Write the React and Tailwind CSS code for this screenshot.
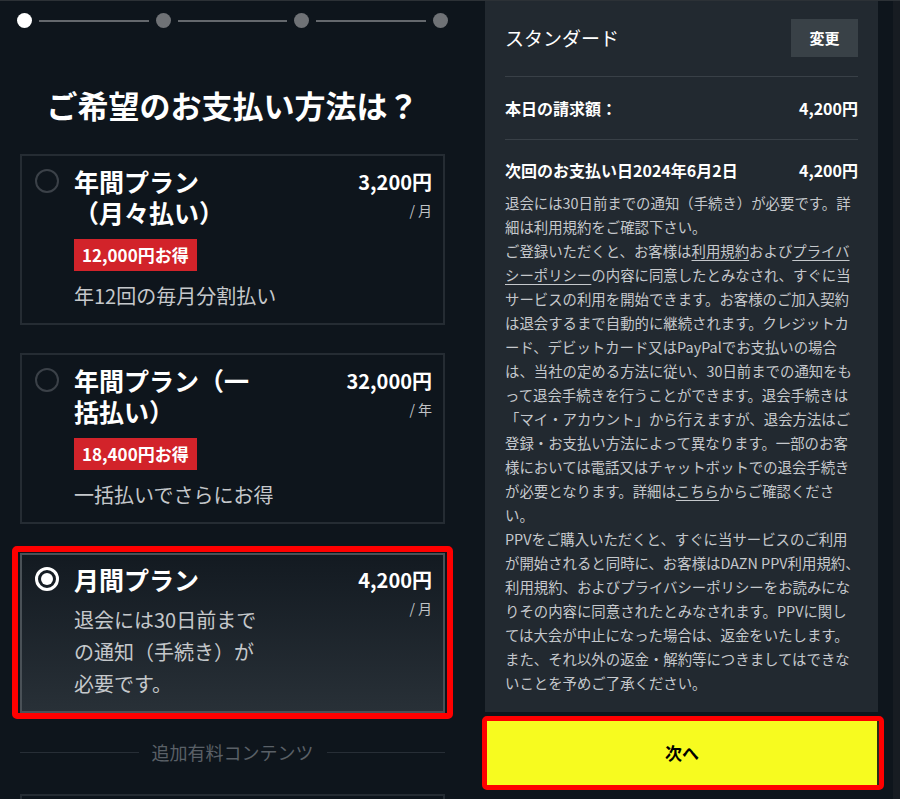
import React from "react";

const FONT = { fontFamily: '"Noto Sans CJK JP", "Noto Sans", sans-serif' };

const Radio = ({ checked }) =>
    checked ? (
        <span className="w-[24px] h-[24px] rounded-full border-[3px] border-white flex items-center justify-center shrink-0 mt-[3px]">
            <span className="w-[12px] h-[12px] rounded-full bg-white"></span>
        </span>
    ) : (
        <span className="w-[24px] h-[24px] rounded-full border-2 border-[#3b4148] shrink-0 mt-[3px]"></span>
    );

// lines joined with <br/> so each block stays one text run
const Lines = ({ items }) =>
    items.map((t, i) => (
        <React.Fragment key={i}>
            {i > 0 && <br />}
            {t}
        </React.Fragment>
    ));

const PlanCard = ({ title, price, unit, badge, desc, checked }) => (
    <div
        className={`flex border-2 pl-[13px] pr-[11px] ${
            checked
                ? "border-[#4a5157] bg-gradient-to-b from-[#131a21] to-[#283037] pt-[9px] pb-[11px]"
                : "border-[#252c33] pt-[10px] pb-[12px]"
        }`}
    >
        <Radio checked={checked} />
        <div className="ml-[15px] flex-1">
            <p className="text-[25px] font-bold text-white leading-[31px] whitespace-nowrap">
                <Lines items={title} />
            </p>
            {badge && (
                <div className="mt-[11px] inline-flex items-center h-[32px] px-[8px] bg-[#d2232a] text-white text-[17px] font-bold">
                    {badge}
                </div>
            )}
            <p
                className={`text-[20px] text-[#c5c8cb] whitespace-nowrap ${
                    checked ? "mt-[9px] leading-[32px]" : "mt-[10px] leading-[30px]"
                }`}
            >
                <Lines items={desc} />
            </p>
        </div>
        <div className="text-right">
            <div className="text-[20px] font-bold text-white leading-[31px]">{price}</div>
            <div className="text-[14px] text-[#c0c3c6] leading-[26px]">{unit}</div>
        </div>
    </div>
);

const U = ({ children }) => <span className="underline underline-offset-[3px]">{children}</span>;

const terms = [
    "退会には30日前までの通知（手続き）が必要です。詳",
    "細は利用規約をご確認下さい。",
    <>ご登録いただくと、お客様は<U>利用規約</U>および<U>プライバ</U></>,
    <><U>シーポリシー</U>の内容に同意したとみなされ、すぐに当</>,
    "サービスの利用を開始できます。お客様のご加入契約",
    "は退会するまで自動的に継続されます。クレジットカ",
    "ード、デビットカード又はPayPalでお支払いの場合",
    "は、当社の定める方法に従い、30日前までの通知をも",
    "って退会手続きを行うことができます。退会手続きは",
    "「マイ・アカウント」から行えますが、退会方法はご",
    "登録・お支払い方法によって異なります。一部のお客",
    "様においては電話又はチャットボットでの退会手続き",
    <>が必要となります。詳細は<U>こちら</U>からご確認くださ</>,
    "い。",
    "PPVをご購入いただくと、すぐに当サービスのご利用",
    "が開始されると同時に、お客様はDAZN PPV利用規約、",
    "利用規約、およびプライバシーポリシーをお読みにな",
    "りその内容に同意されたとみなされます。PPVに関し",
    "ては大会が中止になった場合は、返金をいたします。",
    "また、それ以外の返金・解約等につきましてはできな",
    "いことを予めご了承ください。",
];

export default function App() {
    return (
        <div style={FONT} className="w-[900px] h-[799px] overflow-hidden bg-[#0e151c] border-t border-[#2c3136] flex">
            {/* Left: plan selection */}
            <div className="w-[425px] ml-[20px] shrink-0">
                <div className="flex items-center mt-[12px] -mx-[3px]">
                    <span className="w-[15px] h-[15px] rounded-full bg-white shrink-0"></span>
                    <span className="flex-1 h-[2px] mx-[7px] bg-[#64686d]"></span>
                    <span className="w-[15px] h-[15px] rounded-full bg-[#6f7276] shrink-0"></span>
                    <span className="flex-1 h-[2px] mx-[7px] bg-[#64686d]"></span>
                    <span className="w-[15px] h-[15px] rounded-full bg-[#6f7276] shrink-0"></span>
                    <span className="flex-1 h-[2px] mx-[7px] bg-[#64686d]"></span>
                    <span className="w-[15px] h-[15px] rounded-full bg-[#6f7276] shrink-0"></span>
                </div>

                <h1 className="mt-[57px] text-center text-[31px] font-bold text-white leading-[40px]">
                    ご希望のお支払い方法は？
                </h1>

                <div className="mt-[29px]">
                    <PlanCard
                        title={["年間プラン", "（月々払い）"]}
                        price="3,200円"
                        unit="/ 月"
                        badge="12,000円お得"
                        desc={["年12回の毎月分割払い"]}
                    />
                </div>
                <div className="mt-[28px]">
                    <PlanCard
                        title={["年間プラン（一", "括払い）"]}
                        price="32,000円"
                        unit="/ 年"
                        badge="18,400円お得"
                        desc={["一括払いでさらにお得"]}
                    />
                </div>
                <div className="mt-[22px] -mx-[8px] border-[6px] border-[#ff0000] rounded-[5px] px-[2px] pt-px">
                    <PlanCard
                        checked
                        title={["月間プラン"]}
                        price="4,200円"
                        unit="/ 月"
                        desc={["退会には30日前まで", "の通知（手続き）が", "必要です。"]}
                    />
                </div>

                <div className="mt-[20px] flex items-center">
                    <span className="flex-1 h-px bg-[#272e36]"></span>
                    <span className="px-[13px] text-[18px] leading-[26px] text-[#5a6067]">追加有料コンテンツ</span>
                    <span className="flex-1 h-px bg-[#272e36]"></span>
                </div>

                <div className="mt-[29px] h-[60px] border-2 border-[#252c33]"></div>
            </div>

            {/* Right: summary */}
            <div className="w-[393px] ml-[40px] shrink-0 flex flex-col">
                <div className="bg-[#222930] px-[20px] pt-[18px] pb-[17px]">
                    <div className="flex items-center justify-between h-[38px]">
                        <span className="text-[19px] text-white">スタンダード</span>
                        <button className="w-[67px] h-[38px] bg-[#394147] text-white text-[15px] font-bold">変更</button>
                    </div>
                    <div className="mt-[19px] h-[63px] border-t-[1.5px] border-[#394047] flex items-center justify-between">
                        <span className="text-[16px] font-bold text-white">本日の請求額：</span>
                        <span className="text-[16px] font-bold text-white">4,200円</span>
                    </div>
                    <div className="border-t-[1.5px] border-[#394047] pt-[18px] flex items-center justify-between leading-[24px]">
                        <span className="text-[16px] font-bold text-white">次回のお支払い日2024年6月2日</span>
                        <span className="text-[16px] font-bold text-white">4,200円</span>
                    </div>
                    <p className="mt-[9px] text-[14.4px] leading-[24px] text-[#c5c8cc] whitespace-nowrap">
                        <Lines items={terms} />
                    </p>
                </div>
                <div className="mt-[4px] -ml-[3px] w-[402px] border-[5px] border-[#ff0000] rounded-[5px]">
                    <button className="w-full h-[64px] bg-[#f7fb1f] border-r-2 border-[#2a2c14] text-[17px] font-bold text-black">
                        次へ
                    </button>
                </div>
            </div>

            <div className="ml-[15px] w-[7px] bg-[#171c22]"></div>
        </div>
    );
}
